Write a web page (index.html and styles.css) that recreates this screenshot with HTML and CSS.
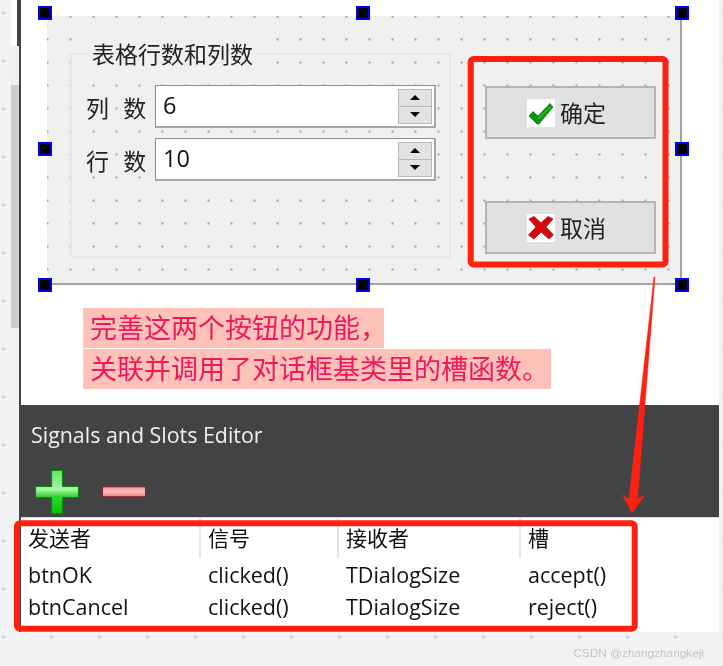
FILE: index.html
```html
<!DOCTYPE html>
<html lang="zh">
<head>
<meta charset="utf-8">
<title>Signals and Slots</title>
<link rel="stylesheet" href="styles.css">
</head>
<body>
<div class="page">
  <div class="app">
    <div class="rail">
      <div class="rail-top"></div>
      <div class="rail-track"></div>
      <div class="rail-thumb"></div>
    </div>
    <div class="main">
      <section class="designer">
        <div class="form">
          <div class="group">
            <div class="group-title">表格行数和列数</div>
            <div class="field">
              <span class="field-label">列 数</span>
              <div class="spin">
                <span class="spin-value">6</span>
                <div class="spin-buttons">
                  <div class="spin-btn"><i class="tri-up"></i></div>
                  <div class="spin-btn"><i class="tri-down"></i></div>
                </div>
              </div>
            </div>
            <div class="field">
              <span class="field-label">行 数</span>
              <div class="spin">
                <span class="spin-value">10</span>
                <div class="spin-buttons">
                  <div class="spin-btn"><i class="tri-up"></i></div>
                  <div class="spin-btn"><i class="tri-down"></i></div>
                </div>
              </div>
            </div>
          </div>
          <div class="actions">
            <div class="action">
              <svg class="action-icon" viewBox="0 0 28 28"><rect width="28" height="28" fill="#fff"/><path d="M2 17 L6 12.500 L11 17 L23 4.500 L26 8 L12 25 L10 25 Z" fill="#0a9612" stroke="#0a8010" stroke-width=".8"/><path d="M11 18.500 L23 7 L24 8.500 L12 21 Z" fill="#2aae30"/></svg>
              <span class="action-text">确定</span>
            </div>
            <div class="action">
              <svg class="action-icon" viewBox="0 0 28 28"><rect width="28" height="28" fill="#fff"/><path d="M2 5 L7 2.500 L14 9 L21 2.500 L26 5 L19 13 L26.500 21 L22 25 L14 18 L7 25 L1.500 21 L9 13 Z" fill="#d20a0e" stroke="#c00a0c" stroke-width=".8"/></svg>
              <span class="action-text">取消</span>
            </div>
          </div>
          <i class="handle h-tl"></i><i class="handle h-tc"></i><i class="handle h-tr"></i>
          <i class="handle h-ml"></i><i class="handle h-mr"></i>
          <i class="handle h-bl"></i><i class="handle h-bc"></i><i class="handle h-br"></i>
        </div>
        <div class="note">
          <div class="note-line note-short">完善这两个按钮的功能，</div>
          <div class="note-line">关联并调用了对话框基类里的槽函数。</div>
        </div>
      </section>
      <section class="editor-bar">
        <div class="editor-title">Signals and Slots Editor</div>
        <div class="editor-tools">
          <svg class="tool" viewBox="0 0 44 44">
            <defs>
              <linearGradient id="plusFill" x1="0" y1="0" x2="0" y2="1">
                <stop offset="0" stop-color="#5fe85f"/><stop offset=".45" stop-color="#a8f2a8"/><stop offset=".6" stop-color="#2ed82e"/><stop offset="1" stop-color="#00c400"/>
              </linearGradient>
            </defs>
            <path d="M16.500 0.500H27.500V16.500H43.500V27.500H27.500V43.500H16.500V27.500H0.500V16.500H16.500Z" fill="url(#plusFill)" stroke="#0c8a0c" stroke-width="1.200"/>
          </svg>
          <svg class="tool" viewBox="0 0 44 44">
            <defs>
              <linearGradient id="minusFill" x1="0" y1="0" x2="0" y2="1">
                <stop offset="0" stop-color="#f09a9a"/><stop offset=".5" stop-color="#ffbcbc"/><stop offset="1" stop-color="#ee8080"/>
              </linearGradient>
            </defs>
            <rect x="0.500" y="16.800" width="43" height="10" fill="url(#minusFill)" stroke="#7e2222" stroke-width="1"/>
          </svg>
        </div>
      </section>
      <section class="connections">
        <div class="cell head">发送者</div><div class="cell head">信号</div><div class="cell head">接收者</div><div class="cell head last">槽</div>
        <div class="cell">btnOK</div><div class="cell">clicked()</div><div class="cell">TDialogSize</div><div class="cell">accept()</div>
        <div class="cell">btnCancel</div><div class="cell">clicked()</div><div class="cell">TDialogSize</div><div class="cell">reject()</div>
      </section>
    </div>
  </div>
  <div class="watermark">CSDN @zhangzhangkeji</div>
  <svg class="markup" viewBox="0 0 723 666">
    <rect x="470.700" y="59" width="194.800" height="205.500" rx="3" class="markup-box"/>
    <rect x="17" y="523.300" width="617.700" height="105.400" rx="3" class="markup-box"/>
    <path d="M655 277 L637.500 499 L645 495 L632 513 L622.500 495 L629 499 L654 277 Z" class="markup-arrow"/>
  </svg>
</div>
</body>
</html>
```
FILE: styles.css
```css
* { box-sizing: border-box; }
html, body { margin: 0; padding: 0; }
body {
  width: 723px;
  height: 666px;
  overflow: hidden;
  font-family: "Noto Sans CJK SC", sans-serif;
}
.page {
  position: relative;
  width: 723px;
  height: 666px;
  overflow: hidden;
  background-color: #f2f2f5;
  background-image: radial-gradient(circle at 2px 2px, #c6c6c8 1.2px, transparent 1.7px);
  background-size: 48px 48px;
  background-position: 1.5px 11px;
  filter: blur(0.4px);
}
.app { display: flex; height: 632px; }
.rail { width: 19px; padding-left: 11px; display: flex; flex-direction: column; }
.rail-top { height: 46px; background: #fff; border-right: 2px solid #444; }
.rail-track { height: 39px; background: #f0f0f0; }
.rail-thumb { height: 243px; background: #cdcdcd; }
.main {
  width: 700px;
  height: 632px;
  border-left: 2px solid #444;
  background: #fff;
  display: flex;
  flex-direction: column;
}
.designer { height: 405px; padding: 16px 0 0 26px; }
.form {
  position: relative;
  width: 635px;
  height: 269px;
  padding: 37px 0 0 23px;
  display: flex;
  background-color: #f0f0f0;
  background-image: radial-gradient(circle at 2px 2px, #a2a2a2 1px, transparent 1.5px);
  background-size: 23px 23px;
  background-position: -1.5px -1.5px;
  border-right: 2px solid #a3a3a3;
  border-bottom: 2px solid #a3a3a3;
}
.group {
  width: 381px;
  height: 205px;
  padding: 0 0 0 14px;
  border: 2px solid #e7e7e7;
  color: #222;
}
.group-title {
  width: 168px;
  height: 32px;
  margin: -18px 0 16px 3px;
  padding-left: 3px;
  background: #f0f0f0;
  font-size: 23px;
  line-height: 32px;
  white-space: nowrap;
}
.field { display: flex; align-items: center; margin-bottom: 10px; }
.field-label { width: 69px; font-size: 23px; line-height: 30px; word-spacing: 9px; white-space: nowrap; }
.spin {
  width: 281px;
  height: 43px;
  display: flex;
  align-items: center;
  justify-content: space-between;
  padding: 0 2px 0 7px;
  background: #fff;
  border: 1.500px solid #8f8f8f;
  border-right: 2px solid #a8a8a8;
  border-bottom: 2px solid #a8a8a8;
}
.spin-value { font-family: "Open Sans", sans-serif; font-size: 23.500px; color: #111; line-height: 30px; margin-top: -2px; }
.spin-buttons { width: 34px; height: 35px; display: flex; flex-direction: column; border: 1.500px solid #b8b8b8; background: #b8b8b8; gap: 1px; }
.spin-btn { flex: 1; background: #e3e3e3; display: flex; align-items: center; justify-content: center; }
.tri-up { border: 5.500px solid transparent; border-top: 0; border-bottom: 5px solid #000; }
.tri-down { border: 5.500px solid transparent; border-bottom: 0; border-top: 5px solid #000; }
.actions { margin: 33px 0 0 34px; display: flex; flex-direction: column; gap: 62px; }
.action {
  width: 171px;
  height: 53px;
  display: flex;
  align-items: center;
  justify-content: center;
  gap: 5px;
  padding-right: 8px;
  background: #e1e1e1;
  border: 2px solid #b4b4b4;
  color: #222;
  font-size: 23px;
}
.action-text { margin-top: -2px; }
.action-icon { width: 28px; height: 28px; }
.handle {
  position: absolute;
  width: 14px;
  height: 14px;
  background: #000;
  border: 2px solid #0000f0;
}
.h-tl { left: -9px; top: -10px; }
.h-tc { left: 309px; top: -10px; }
.h-tr { left: 628px; top: -10px; }
.h-ml { left: -9px; top: 126px; }
.h-mr { left: 628px; top: 126px; }
.h-bl { left: -9px; top: 262px; }
.h-bc { left: 309px; top: 262px; }
.h-br { left: 628px; top: 262px; }
.note { margin: 23px 0 0 36px; display: flex; flex-direction: column; align-items: flex-start; gap: 1px; }
.note-line {
  height: 40px;
  padding: 0 2px 0 7px;
  background: #ffc2b8;
  color: #f0185c;
  font-size: 27px;
  line-height: 38px;
  white-space: nowrap;
}
.note-short { width: 301px; }
.editor-bar { height: 112px; background: #424344; padding: 16px 0 0 10px; }
.editor-title { font-family: "Open Sans", sans-serif; font-size: 21.400px; line-height: 28px; color: #f0f0f0; white-space: nowrap; }
.editor-tools { display: flex; gap: 23px; margin: 21px 0 0 4px; }
.tool { width: 44px; height: 44px; }
.connections {
  flex: 1;
  display: grid;
  grid-template-columns: 180px 138px 182px 1fr;
  grid-template-rows: 42px 32px 32px;
  align-content: start;
  font-family: "Open Sans", sans-serif;
  font-size: 21.500px;
  color: #111;
}
.cell { padding-left: 7px; line-height: 32px; white-space: nowrap; }
.head {
  font-family: "Noto Sans CJK SC", sans-serif;
  font-size: 21px;
  line-height: 38px;
  height: 41px;
  border-top: 1px solid #d8d8d8;
  border-right: 2px solid #e6e6e6;
}
.head.last { border-right: 0; }
.watermark {
  height: 34px;
  padding-right: 19px;
  text-align: right;
  font-family: "Liberation Sans", sans-serif;
  font-size: 11.800px;
  line-height: 42px;
  color: #c4c4c4;
}
.markup { position: absolute; left: 0; top: 0; width: 723px; height: 666px; }
.markup-box { fill: none; stroke: #ff2010; stroke-width: 6; }
.markup-arrow { fill: #ff2010; stroke: #ff2010; stroke-width: .5; }
```
